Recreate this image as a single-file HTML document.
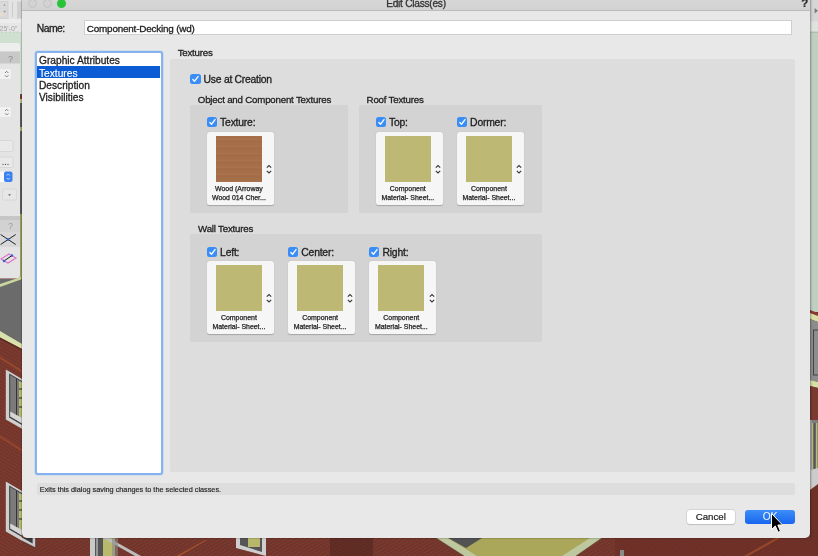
<!DOCTYPE html>
<html><head><meta charset="utf-8">
<style>
*{box-sizing:border-box;margin:0;padding:0}
html,body{width:818px;height:556px;overflow:hidden;background:#7a3a2f;font-family:"Liberation Sans",sans-serif;color:#1e1e1e}
#root{position:absolute;left:0;top:0;width:818px;height:556px;will-change:transform;overflow:hidden}
.abs{position:absolute}
#win{position:absolute;left:22px;top:-30px;width:788px;height:568px;background:#e8e8e8;border-radius:0 0 5px 5px;box-shadow:0 0 1px 0.3px rgba(0,0,0,.14)}
#title{position:absolute;left:0;top:0;width:788px;height:41px;background:linear-gradient(#e0e0e0,#d3d3d3);border-bottom:1px solid #bcbcbc}
.tl{position:absolute;top:28.8px;width:9.2px;height:9.2px;border-radius:50%}
.t{position:absolute;white-space:nowrap;line-height:1;-webkit-text-stroke:0.3px #1e1e1e}
.field{position:absolute;background:#fff;border:1px solid #cfcfcf}
#list{position:absolute;left:35.2px;top:51px;width:127.6px;height:423.5px;border:2.4px solid #86b2ed;border-radius:3px;background:#fff;box-shadow:0 0 0 0.6px #b9d1f2}
.row{position:absolute;left:0;width:122.8px;height:12px;font-size:10.2px;line-height:12px;padding-left:1.8px;white-space:nowrap;-webkit-text-stroke:0.3px #1e1e1e}
#panel{position:absolute;left:170px;top:58.5px;width:625px;height:413px;background:#dddddd;border-radius:2.5px}
.grp{position:absolute;background:#d3d3d3;border-radius:2px}
.cb{position:absolute;width:10.3px;height:10.1px;border-radius:2.5px;background:#3a8df6}
.cb svg{position:absolute;left:0;top:0}
.tile{position:absolute;width:67px;height:73.2px;background:#f6f6f6;border-radius:2.5px;box-shadow:0 0.5px 1px rgba(0,0,0,.22)}
.sw{position:absolute;left:9.2px;top:4.4px;width:46px;height:46px;background:#bdb873}
.stp{position:absolute;left:59.4px;top:32.3px}
.lbl{position:absolute;left:-1.4px;width:67px;text-align:center;font-size:6.95px;line-height:8.6px;color:#1e1e1e;white-space:nowrap;-webkit-text-stroke:0.25px #1e1e1e}
.btn{position:absolute;height:14.3px;border-radius:3px;font-size:9.7px;line-height:14px;text-align:center;-webkit-text-stroke:0.2px #1e1e1e}
</style></head><body><div id="root">
<svg class="abs" style="left:0;top:0" width="22" height="556" viewBox="0 0 22 556"><defs><pattern id="brk" width="3" height="3" patternUnits="userSpaceOnUse" patternTransform="rotate(30)"><rect width="3" height="3" fill="#7e3c31"/><rect y="2" width="3" height="1" fill="#6f332a"/><rect x="2" width="1" height="2" fill="#74362c"/></pattern></defs><rect x="0" y="0" width="22" height="556" fill="url(#brk)"/><rect x="0" y="32" width="22" height="62" fill="#cfe0d1"/><rect x="19" y="94" width="3" height="120" fill="#595959"/><rect x="19" y="95" width="3" height="4" fill="#7a3a2f"/><rect x="19" y="99" width="3" height="4" fill="#b9bd80"/><rect x="19" y="127" width="3" height="4" fill="#a9ad60"/><rect x="19" y="214" width="3" height="66" fill="#9c9c5a"/><polygon points="0,279 22,279 22,346 0,334" fill="#6b6b6b"/><polygon points="0,284 21,277 21,279.5 0,287" fill="#c9d69e"/><polygon points="0,331 22,344 22,349 0,337.5" fill="#d9e2ac"/><polygon points="0,337.5 22,349 22,350.5 0,339" fill="#5a2a22"/><polygon points="0,356 22,370 22,373 0,359" fill="#b0532c" opacity=".5"/><polygon points="0,435 22,449 22,452 0,438" fill="#b0532c" opacity=".45"/><g transform="translate(0,0)"><polygon points="5.8,369.6 22,379 22,428.8 5.8,419.4" fill="#cfcfcf"/><polygon points="9.2,373.5 22,381 22,425 9.2,417.5" fill="#3a3a3a"/><polygon points="10.2,375 22,382 22,423.5 10.2,416.5" fill="#7b7b7b"/><rect x="16" y="378.5" width="1" height="42" fill="#333"/><polygon points="19,381 22,382.5 22,421 19,419.5" fill="#b6ba6e"/><path d="M19 389 h3 M19 398 h3 M19 407 h3" stroke="#222" stroke-width="1"/><polygon points="10.2,411.5 22,418 22,423.5 10.2,416.5" fill="#d6d6d6"/></g><g transform="translate(0,112)"><polygon points="5.8,369.6 22,379 22,428.8 5.8,419.4" fill="#cfcfcf"/><polygon points="9.2,373.5 22,381 22,425 9.2,417.5" fill="#3a3a3a"/><polygon points="10.2,375 22,382 22,423.5 10.2,416.5" fill="#7b7b7b"/><rect x="16" y="378.5" width="1" height="42" fill="#333"/><polygon points="19,381 22,382.5 22,421 19,419.5" fill="#b6ba6e"/><path d="M19 389 h3 M19 398 h3 M19 407 h3" stroke="#222" stroke-width="1"/><polygon points="10.2,411.5 22,418 22,423.5 10.2,416.5" fill="#d6d6d6"/></g><rect x="0" y="0" width="22" height="19" fill="#e3e3e3"/><rect x="-1" y="1.5" width="9" height="17" fill="#d9d9d9" stroke="#c9c9c9" stroke-width=".6"/><path d="M4.5 6 l0 -1.5 M3.5 5.5 l1 -1 l1 1 M3.5 11.5 h2.5 M4.75 10.25 v2.5" stroke="#999" stroke-width=".7" fill="none"/><rect x="0" y="13" width="3" height="3" fill="#e6ddcc"/><rect x="12" y="2" width="1" height="15" fill="#cbcbcb"/><rect x="17" y="1.5" width="5" height="17" fill="#d0d0d0"/><rect x="0" y="19" width="22" height="4" fill="#ececec"/><rect x="0" y="23" width="22" height="9" fill="#e6e6e6"/><text x="-0.5" y="31" font-family="Liberation Sans" font-size="7" fill="#a3a3a3">25'-0"</text><path d="M2 31.5v1 M6 31.5v1 M10 31.5v1 M14 31.5v1 M18 31.5v1" stroke="#999" stroke-width=".6"/><path d="M0 43 H17 a3 3 0 0 1 3 3 V275 a3.5 3.5 0 0 1 -3.5 3.5 H0 Z" fill="#e4e4e4"/><path d="M0 43 H17 a3 3 0 0 1 3 3 V51.5 H0 Z" fill="#eeeeee"/><rect x="0" y="51.5" width="20" height="12" fill="#c8c8c8"/><text x="8" y="62" font-family="Liberation Sans" font-size="9" fill="#8a8a8a">?</text><rect x="-3" y="68.5" width="14.5" height="11" rx="2" fill="#f1f1f1" stroke="#dadada" stroke-width=".5"/><path d="M5 73 l1.7 -1.7 l1.7 1.7 M5 75.3 l1.7 1.7 l1.7 -1.7" stroke="#666" stroke-width=".8" fill="none"/><rect x="-3" y="106.5" width="14.5" height="11" rx="2" fill="#f1f1f1" stroke="#dadada" stroke-width=".5"/><path d="M5 111 l1.7 -1.7 l1.7 1.7 M5 113.3 l1.7 1.7 l1.7 -1.7" stroke="#666" stroke-width=".8" fill="none"/><rect x="-3" y="140.5" width="16" height="11" rx="1.5" fill="#e9e9e9" stroke="#cdcdcd" stroke-width=".6"/><rect x="-3" y="157" width="16" height="10.5" rx="1.5" fill="#e9e9e9" stroke="#cdcdcd" stroke-width=".6"/><circle cx="3" cy="164.3" r=".65" fill="#444"/><circle cx="5.5" cy="164.3" r=".65" fill="#444"/><circle cx="8" cy="164.3" r=".65" fill="#444"/><rect x="-3" y="171.5" width="8" height="10.5" fill="#fafafa"/><rect x="4" y="171.5" width="8.5" height="10.5" rx="2" fill="#3a82f2"/><path d="M6.7 175.5 l1.5 -1.5 l1.5 1.5 M6.7 178 l1.5 1.5 l1.5 -1.5" stroke="#fff" stroke-width=".7" fill="none"/><rect x="2.5" y="189" width="14" height="11" rx="1.5" fill="#e6e6e6" stroke="#d0d0d0" stroke-width=".6"/><path d="M8 194.3 h3 l-1.5 1.6z" fill="#666"/><rect x="0" y="216" width="20" height="4" fill="#c6c6c6"/><rect x="0" y="220" width="20" height="12" fill="#d2d2d2"/><text x="8" y="229" font-family="Liberation Sans" font-size="9" fill="#9a9a9a">?</text><rect x="0" y="232" width="20" height="15" fill="#d8d8d8"/><path d="M0.6 234.5 L15.7 244.5 M0.6 244.5 L15.7 234.5" stroke="#222" stroke-width="1"/><circle cx="8" cy="239.5" r="1.3" fill="#2d63d6"/><path d="M1 259 L9 254 L16 258 L8 263 Z" fill="none" stroke="#e070c8" stroke-width="1.1"/><path d="M4 261 L12 255.5" stroke="#111" stroke-width="1"/><circle cx="4" cy="261" r="1.2" fill="#2b5fd8"/><circle cx="12" cy="255.5" r="1.2" fill="#2b5fd8"/><rect x="21.2" y="0" width="0.8" height="538" fill="#3a3a3a" opacity=".1"/></svg>
<svg class="abs" style="left:810px;top:0" width="8" height="556" viewBox="810 0 8 556"><rect x="810" y="0" width="8" height="556" fill="#6e3128"/><rect x="810" y="0" width="8" height="22" fill="#d6d6d6"/><path d="M814.6 8 l3.4 2.7 l-3.4 2.7z" fill="#7a7a7a"/><rect x="810" y="21.5" width="8" height="11" fill="#dfe3df"/><rect x="810" y="31.6" width="8" height="0.8" fill="#b0b8b0"/><rect x="810" y="32.4" width="8" height="279.6" fill="#bfcfc2"/><polygon points="810,310 818,313 818,316 810,313" fill="#8c3a30"/><polygon points="810,313 818,316 818,322 810,319" fill="#d8e0a6"/><polygon points="810,319 818,322 818,382 810,380" fill="#8d8d8d"/><rect x="813.5" y="330" width="5" height="45" fill="none" stroke="#3d3d3d" stroke-width=".9"/><polygon points="810,380 818,382 818,388 810,386" fill="#d6dfa5"/><polygon points="810,386 818,388 818,420 810,420" fill="#7a3a2f"/><rect x="810" y="420" width="8" height="52" fill="#7d7d7d"/><rect x="810" y="420" width="1.5" height="52" fill="#bdbdbd"/><rect x="812" y="423" width="1.3" height="46" fill="#b9bc6c"/><rect x="816" y="423" width="1.3" height="46" fill="#b9bc6c"/><rect x="813.5" y="423" width="2" height="46" fill="#555"/><polygon points="810,470 818,468 818,484 810,490" fill="#cbcbcb"/></svg>
<svg class="abs" style="left:0;top:538px" width="818" height="18" viewBox="0 538 818 18"><defs><pattern id="brk2" width="3" height="3" patternUnits="userSpaceOnUse" patternTransform="rotate(-30)"><rect width="3" height="3" fill="#7b3b30"/><rect y="2" width="3" height="1" fill="#6c3229"/><rect x="2" width="1" height="2" fill="#72352c"/></pattern></defs><rect x="22" y="538" width="796" height="18" fill="url(#brk2)"/><polygon points="22,538 35.6,538 35.6,547.8 22,541" fill="#cbcbcb"/><polygon points="22,537.5 32.6,538 32.6,543.6 22,537.5" fill="#3a3a3a"/><path d="M22 541 L35.6 547.8 V538" stroke="#3a2a24" stroke-width=".6" fill="none"/><rect x="90" y="538" width="5" height="18" fill="#c9c9c9"/><rect x="95" y="538" width="8" height="18" fill="#555"/><rect x="96" y="538" width="2" height="18" fill="#999"/><rect x="103" y="538" width="12" height="18" fill="#b8b96c"/><polygon points="103,538 109,538 141,556 135,556" fill="#bdbdbd"/><polygon points="112,538 118,538 118,556 112,556" fill="#888" opacity=".6"/><polygon points="176,556 205,540 207,540 180,556" fill="#b5582b" opacity=".7"/><polygon points="236,538 266,538 266,556 236,548" fill="#cfcfcf"/><polygon points="240,538 262,538 262,552 240,545" fill="#555"/><rect x="248" y="538" width="12" height="9" fill="#b7b86b"/><rect x="330" y="538" width="43" height="18" fill="#4a221c" opacity=".45"/><polygon points="436,538 602,538 576,556 464,556" fill="#bfc79f"/><polygon points="448,538 590,538 562,556 477,556" fill="#aaa75b"/><polygon points="448,538 482,538 466,548" fill="#525252"/><path d="M436,538 L464,556 M602,538 L576,556" stroke="#5c4a3a" stroke-width=".7"/><rect x="615" y="538" width="203" height="18" fill="#6a2c24" opacity=".55"/><polygon points="744,556 776,538 780,538 748,556" fill="#b5582b" opacity=".6"/><rect x="620" y="550" width="4" height="6" fill="#8a8a8a"/></svg>
<div class="abs" style="left:810px;top:0;width:3px;height:538px;background:linear-gradient(90deg,rgba(0,0,0,.16),rgba(0,0,0,0))"></div>
<div id="win">
  <div id="title">
    <div class="tl" style="left:6px;background:#d3d3d3;border:0.8px solid #c2c2c2"></div>
    <div class="tl" style="left:20.5px;background:#d3d3d3;border:0.8px solid #c2c2c2"></div>
    <div class="tl" style="left:35px;background:#27c43a"></div>
    <div class="t " style="left:364.2px;top:28.67px;font-size:10.2px;color:#333;-webkit-text-stroke-color:#333;letter-spacing:-0.27px">Edit Class(es)</div>
    <div class="t" style="left:779.3px;top:27.6px;font-size:11.5px;font-weight:bold;color:#2a2a2a;-webkit-text-stroke:0.2px #2a2a2a">?</div>
  </div>
</div>
<div class="t " style="left:36.8px;top:23.60px;font-size:10.4px;letter-spacing:-0.55px">Name:</div>
<div class="field" style="left:84.4px;top:20.2px;width:707.6px;height:14.8px"></div>
<div class="t " style="left:86.8px;top:24.02px;font-size:9.9px;letter-spacing:-0.19px">Component-Decking (wd)</div>
<div id="list">
  <div class="row" style="top:1.9px">Graphic Attributes</div>
  <div class="row" style="top:13.2px;height:12px;background:#0b5cd5;color:#fff;-webkit-text-stroke:0.15px #fff"><span style="position:relative;top:2.2px">Textures</span></div>
  <div class="row" style="top:26.6px">Description</div>
  <div class="row" style="top:38.9px">Visibilities</div>
</div>
<div class="t " style="left:177.7px;top:48.29px;font-size:9.7px;letter-spacing:-0.22px">Textures</div>
<div id="panel"></div>
<div class="cb" style="left:190.3px;top:74.2px"><svg width="10.3" height="10.1" viewBox="0 0 10.6 10.5"><path d="M2.9 5.8 L4.6 7.5 L8.3 2.7" fill="none" stroke="#f4faff" stroke-width="1.45" stroke-linecap="round" stroke-linejoin="round"/></svg></div><div class="t " style="left:203.60000000000002px;top:74.90px;font-size:10.4px;letter-spacing:-0.27px">Use at Creation</div>
<div class="t " style="left:197.8px;top:95.09px;font-size:9.7px;letter-spacing:-0.19px">Object and Component Textures</div>
<div class="grp" style="left:190.3px;top:104.8px;width:157.7px;height:108px"></div>
<div class="t " style="left:366.6px;top:95.09px;font-size:9.7px;letter-spacing:-0.2px">Roof Textures</div>
<div class="grp" style="left:359.3px;top:104.8px;width:182.7px;height:108px"></div>
<div class="cb" style="left:206.8px;top:117.3px"><svg width="10.3" height="10.1" viewBox="0 0 10.6 10.5"><path d="M2.9 5.8 L4.6 7.5 L8.3 2.7" fill="none" stroke="#f4faff" stroke-width="1.45" stroke-linecap="round" stroke-linejoin="round"/></svg></div><div class="t " style="left:220.10000000000002px;top:117.90px;font-size:10.4px;letter-spacing:-0.22px">Texture:</div>
<div class="tile" style="left:206.8px;top:131.6px"><div class="sw" style="background:repeating-linear-gradient(#a56f4a 0 3px,#a8734e 3px 4px,#a46d48 4px 7px)"></div><svg class="stp" width="6" height="10" viewBox="0 0 6 10"><path d="M0.8 3.7 L3 1.5 L5.2 3.7 M0.8 6.8 L3 9 L5.2 6.8" fill="none" stroke="#383838" stroke-width="1.1"/></svg><div class="lbl" style="top:53.4px">Wood (Arroway<br>Wood 014 Cher...</div></div>
<div class="cb" style="left:375.7px;top:117.3px"><svg width="10.3" height="10.1" viewBox="0 0 10.6 10.5"><path d="M2.9 5.8 L4.6 7.5 L8.3 2.7" fill="none" stroke="#f4faff" stroke-width="1.45" stroke-linecap="round" stroke-linejoin="round"/></svg></div><div class="t " style="left:389.0px;top:117.90px;font-size:10.4px;letter-spacing:-0.22px">Top:</div>
<div class="tile" style="left:375.7px;top:131.6px"><div class="sw" style=""></div><svg class="stp" width="6" height="10" viewBox="0 0 6 10"><path d="M0.8 3.7 L3 1.5 L5.2 3.7 M0.8 6.8 L3 9 L5.2 6.8" fill="none" stroke="#383838" stroke-width="1.1"/></svg><div class="lbl" style="top:53.4px">Component<br>Material- Sheet...</div></div>
<div class="cb" style="left:456.8px;top:117.3px"><svg width="10.3" height="10.1" viewBox="0 0 10.6 10.5"><path d="M2.9 5.8 L4.6 7.5 L8.3 2.7" fill="none" stroke="#f4faff" stroke-width="1.45" stroke-linecap="round" stroke-linejoin="round"/></svg></div><div class="t " style="left:470.1px;top:117.90px;font-size:10.4px;letter-spacing:-0.22px">Dormer:</div>
<div class="tile" style="left:456.8px;top:131.6px"><div class="sw" style=""></div><svg class="stp" width="6" height="10" viewBox="0 0 6 10"><path d="M0.8 3.7 L3 1.5 L5.2 3.7 M0.8 6.8 L3 9 L5.2 6.8" fill="none" stroke="#383838" stroke-width="1.1"/></svg><div class="lbl" style="top:53.4px">Component<br>Material- Sheet...</div></div>
<div class="t " style="left:198.1px;top:223.79px;font-size:9.7px;letter-spacing:-0.2px">Wall Textures</div>
<div class="grp" style="left:190.3px;top:234.3px;width:351.9px;height:107.7px"></div>
<div class="cb" style="left:206.8px;top:246.8px"><svg width="10.3" height="10.1" viewBox="0 0 10.6 10.5"><path d="M2.9 5.8 L4.6 7.5 L8.3 2.7" fill="none" stroke="#f4faff" stroke-width="1.45" stroke-linecap="round" stroke-linejoin="round"/></svg></div><div class="t " style="left:220.10000000000002px;top:247.60px;font-size:10.4px;letter-spacing:-0.22px">Left:</div>
<div class="tile" style="left:206.8px;top:261px"><div class="sw" style=""></div><svg class="stp" width="6" height="10" viewBox="0 0 6 10"><path d="M0.8 3.7 L3 1.5 L5.2 3.7 M0.8 6.8 L3 9 L5.2 6.8" fill="none" stroke="#383838" stroke-width="1.1"/></svg><div class="lbl" style="top:53.4px">Component<br>Material- Sheet...</div></div>
<div class="cb" style="left:288px;top:246.8px"><svg width="10.3" height="10.1" viewBox="0 0 10.6 10.5"><path d="M2.9 5.8 L4.6 7.5 L8.3 2.7" fill="none" stroke="#f4faff" stroke-width="1.45" stroke-linecap="round" stroke-linejoin="round"/></svg></div><div class="t " style="left:301.3px;top:247.60px;font-size:10.4px;letter-spacing:-0.22px">Center:</div>
<div class="tile" style="left:288px;top:261px"><div class="sw" style=""></div><svg class="stp" width="6" height="10" viewBox="0 0 6 10"><path d="M0.8 3.7 L3 1.5 L5.2 3.7 M0.8 6.8 L3 9 L5.2 6.8" fill="none" stroke="#383838" stroke-width="1.1"/></svg><div class="lbl" style="top:53.4px">Component<br>Material- Sheet...</div></div>
<div class="cb" style="left:369.2px;top:246.8px"><svg width="10.3" height="10.1" viewBox="0 0 10.6 10.5"><path d="M2.9 5.8 L4.6 7.5 L8.3 2.7" fill="none" stroke="#f4faff" stroke-width="1.45" stroke-linecap="round" stroke-linejoin="round"/></svg></div><div class="t " style="left:382.5px;top:247.60px;font-size:10.4px;letter-spacing:-0.22px">Right:</div>
<div class="tile" style="left:369.2px;top:261px"><div class="sw" style=""></div><svg class="stp" width="6" height="10" viewBox="0 0 6 10"><path d="M0.8 3.7 L3 1.5 L5.2 3.7 M0.8 6.8 L3 9 L5.2 6.8" fill="none" stroke="#383838" stroke-width="1.1"/></svg><div class="lbl" style="top:53.4px">Component<br>Material- Sheet...</div></div>
<div class="abs" style="left:37px;top:483px;width:758px;height:12px;background:#dddddd;border-radius:2px"></div>
<div class="t " style="left:39.8px;top:485.82px;font-size:7.3px;-webkit-text-stroke-width:0.15px">Exits this dialog saving changes to the selected classes.</div>
<div class="btn" style="left:686.6px;top:509.8px;width:48.4px;background:#fff;box-shadow:0 0 0 0.5px #c6c6c6,0 0.5px 1px rgba(0,0,0,.2)">Cancel</div>
<div class="btn" style="left:745.3px;top:510px;width:49.7px;background:linear-gradient(#3d8df7,#1866ef);color:#f4f8ff;-webkit-text-stroke:0 #fff;font-size:10.2px">OK</div>
<svg class="abs" style="left:770px;top:511.5px" width="16" height="24" viewBox="0 0 16 24"><path d="M1.5 1.5 L1.5 17.6 L5.3 13.9 L8.1 20.3 L10.5 19.2 L7.8 13 L12.6 13 Z" fill="#000" stroke="#fff" stroke-width="1" stroke-linejoin="round"/></svg>
</div></body></html>
